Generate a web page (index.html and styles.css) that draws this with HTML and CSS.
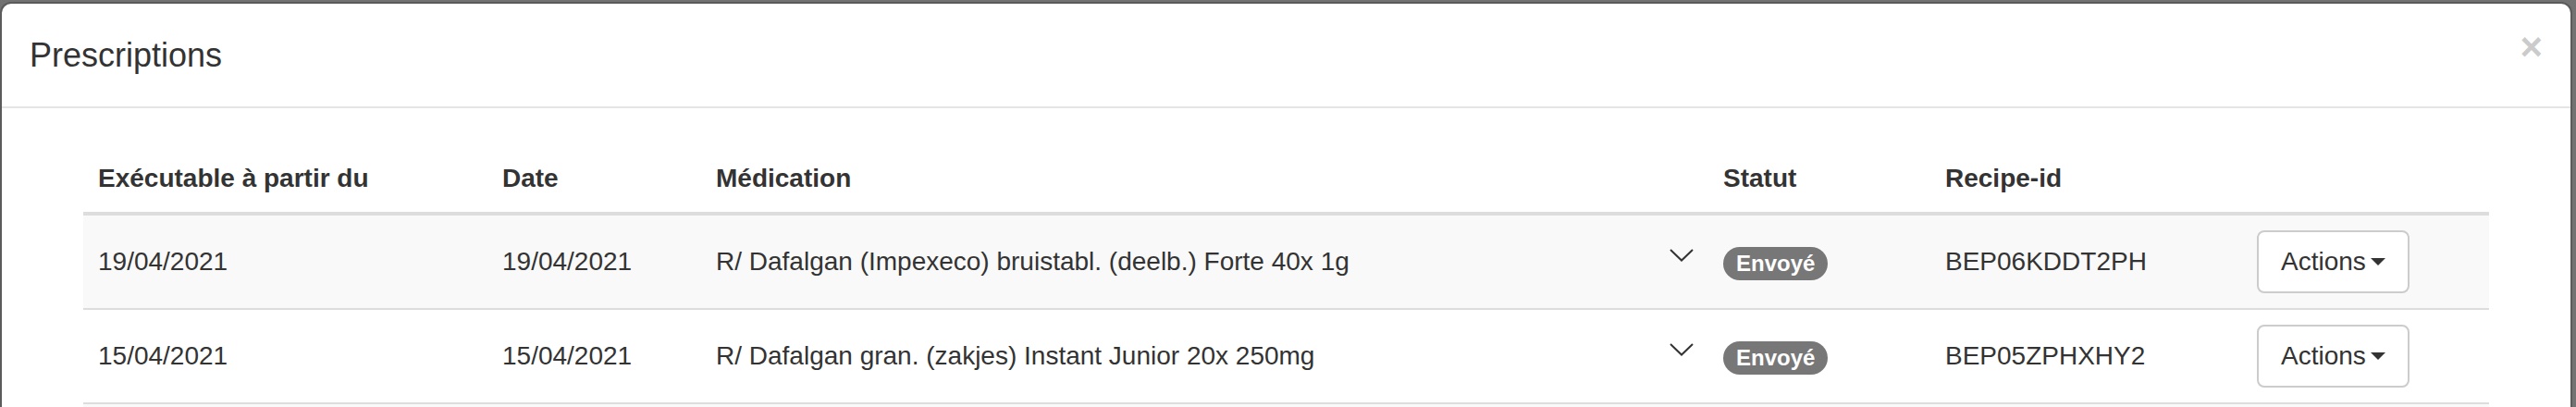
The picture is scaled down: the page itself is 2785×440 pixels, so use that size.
FILE: index.html
```html
<!DOCTYPE html>
<html lang="fr">
<head>
<meta charset="utf-8">
<title>Prescriptions</title>
<link rel="stylesheet" href="styles.css">
</head>
<body>
<div class="modal">
  <div class="modal-header">
    <h4 class="modal-title">Prescriptions</h4>
    <button class="close" type="button" aria-label="Close">×</button>
  </div>
  <div class="modal-body">
    <div class="table-wrap">
      <table class="rx-table">
        <colgroup>
          <col class="c-exec">
          <col class="c-date">
          <col class="c-med">
          <col class="c-status">
          <col class="c-id">
          <col class="c-actions">
        </colgroup>
        <thead>
          <tr>
            <th>Exécutable à partir du</th>
            <th>Date</th>
            <th>Médication</th>
            <th>Statut</th>
            <th>Recipe-id</th>
            <th></th>
          </tr>
        </thead>
        <tbody>
          <tr class="striped">
            <td>19/04/2021</td>
            <td>19/04/2021</td>
            <td>
              <div class="med">
                <span>R/ Dafalgan (Impexeco) bruistabl. (deelb.) Forte 40x 1g</span>
                <svg class="chev" width="26" height="14" viewBox="0 0 26 14"><polyline points="1,1 13,12.5 25,1" fill="none" stroke="#333" stroke-width="2"/></svg>
              </div>
            </td>
            <td><span class="badge">Envoyé</span></td>
            <td>BEP06KDDT2PH</td>
            <td><button class="btn" type="button">Actions<span class="caret"></span></button></td>
          </tr>
          <tr>
            <td>15/04/2021</td>
            <td>15/04/2021</td>
            <td>
              <div class="med">
                <span>R/ Dafalgan gran. (zakjes) Instant Junior 20x 250mg</span>
                <svg class="chev" width="26" height="14" viewBox="0 0 26 14"><polyline points="1,1 13,12.5 25,1" fill="none" stroke="#333" stroke-width="2"/></svg>
              </div>
            </td>
            <td><span class="badge">Envoyé</span></td>
            <td>BEP05ZPHXHY2</td>
            <td><button class="btn" type="button">Actions<span class="caret"></span></button></td>
          </tr>
          <tr class="striped">
            <td>&nbsp;</td>
            <td></td>
            <td></td>
            <td></td>
            <td></td>
            <td></td>
          </tr>
        </tbody>
      </table>
    </div>
  </div>
</div>
</body>
</html>
```

FILE: styles.css
```css
html, body {
  margin: 0;
  padding: 0;
}

body {
  background: #727272;
  font-family: "Liberation Sans", Arial, Helvetica, sans-serif;
  font-size: 28px;
  line-height: 40px;
  color: #333;
  overflow: hidden;
  height: 440px;
}

.modal {
  margin: 2px 4px 0 0;
  background: #fff;
  border: 2px solid rgba(0, 0, 0, 0.2);
  border-bottom: 0;
  background-clip: padding-box;
  border-radius: 12px 12px 0 0;
  height: 438px;
  overflow: hidden;
}

.modal-header {
  display: flex;
  justify-content: space-between;
  align-items: flex-start;
  padding: 30px;
  border-bottom: 2px solid #e5e5e5;
}

.modal-title {
  margin: 0;
  font-size: 36px;
  line-height: 51px;
  font-weight: normal;
  color: #333;
}

.close {
  margin: -4px 0 0;
  padding: 0;
  border: 0;
  background: transparent;
  font-family: "Liberation Sans", Arial, sans-serif;
  font-size: 42px;
  font-weight: bold;
  line-height: 42px;
  color: #000;
  opacity: 0.2;
  cursor: pointer;
}

.modal-body {
  padding: 30px;
}

.table-wrap {
  padding: 10px 58px 0;
}

.rx-table {
  width: 2601px;
  table-layout: fixed;
  border-collapse: separate;
  border-spacing: 0;
}

.c-exec { width: 437px; }
.c-date { width: 231px; }
.c-med { width: 1089px; }
.c-status { width: 240px; }
.c-id { width: 337px; }
.c-actions { width: 267px; }

.rx-table th {
  text-align: left;
  font-weight: bold;
  padding: 16px;
  line-height: 40px;
  border-bottom: 4px solid #ddd;
  vertical-align: bottom;
}

.rx-table td {
  padding: 16px;
  line-height: 40px;
  border-bottom: 2px solid #ddd;
  vertical-align: middle;
  white-space: nowrap;
}

.rx-table tr.striped td {
  background: #f9f9f9;
}

.med {
  display: flex;
  justify-content: space-between;
  align-items: center;
}

.chev {
  display: block;
  margin-bottom: 15px;
}

.badge {
  display: inline-block;
  padding: 6px 14px;
  font-size: 24px;
  font-weight: bold;
  line-height: 24px;
  color: #fff;
  background: #777;
  border-radius: 20px;
  vertical-align: middle;
}

.btn {
  display: inline-flex;
  align-items: center;
  padding: 12px 24px;
  font-family: "Liberation Sans", Arial, sans-serif;
  font-size: 28px;
  line-height: 40px;
  color: #333;
  background: #fff;
  border: 2px solid #ccc;
  border-radius: 8px;
  vertical-align: middle;
}

.caret {
  display: inline-block;
  width: 0;
  height: 0;
  margin-left: 5px;
  border-top: 8px solid #333;
  border-left: 8px solid transparent;
  border-right: 8px solid transparent;
}
```
